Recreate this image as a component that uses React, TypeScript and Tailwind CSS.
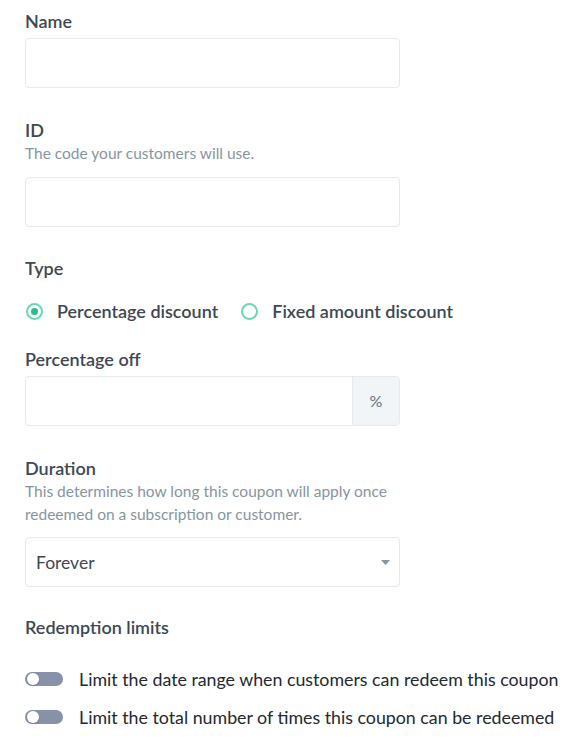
import { useState } from "react";

const font = { fontFamily: "'Source Sans Pro', Lato, 'Liberation Sans', sans-serif" };

function Label({ children }: { children: React.ReactNode }) {
  return <label className="block text-[18px] font-semibold leading-[22px] text-[#3d4852]">{children}</label>;
}

function Help({ children }: { children: React.ReactNode }) {
  return <p className="mt-[1px] text-[15.5px] leading-[23px] text-[#8795a1]">{children}</p>;
}

function Toggle({ label }: { label: string }) {
  const [on, setOn] = useState(false);
  return (
    <button type="button" onClick={() => setOn(!on)} className="flex items-center gap-4 text-left">
      <span className={`relative h-[14px] w-[38px] shrink-0 rounded-full ${on ? "bg-[#38c172]" : "bg-[#8792a8]"}`}>
        <span
          className={`absolute top-[1px] h-[12px] w-[12px] rounded-full bg-white shadow ${on ? "left-[25px]" : "left-[2px]"}`}
        />
      </span>
      <span className="text-[17.8px] leading-[22px] text-[#22292f]">{label}</span>
    </button>
  );
}

export default function App() {
  const [type, setType] = useState("percentage");

  return (
    <div className="min-h-screen bg-white px-[25px] pt-[10px]" style={font}>
      {/* Name */}
      <div>
        <Label>Name</Label>
        <input className="mt-[6px] block h-[50px] w-[375px] rounded border border-[#e6e9ee] px-3 outline-none" />
      </div>

      {/* ID */}
      <div className="mt-[31px]">
        <Label>ID</Label>
        <Help>The code your customers will use.</Help>
        <input className="mt-[12px] block h-[50px] w-[375px] rounded border border-[#e6e9ee] px-3 outline-none" />
      </div>

      {/* Type */}
      <div className="mt-[30px]">
        <Label>Type</Label>
        <div className="mt-[19px] flex items-center gap-[22px]">
          {[
            { id: "percentage", text: "Percentage discount" },
            { id: "fixed", text: "Fixed amount discount" },
          ].map((o) => (
            <button key={o.id} type="button" onClick={() => setType(o.id)} className="flex items-center gap-[14px] pl-[1px]">
              <span className="flex h-[17px] w-[17px] items-center justify-center rounded-full border-2 border-[#6ad6b8]">
                {type === o.id && <span className="h-[7px] w-[7px] rounded-full bg-[#2bbb8c]" />}
              </span>
              <span className="text-[18px] font-semibold text-[#3d4852]">{o.text}</span>
            </button>
          ))}
        </div>
      </div>

      {/* Percentage off */}
      <div className="mt-[23px]">
        <Label>Percentage off</Label>
        <div className="mt-[6px] flex h-[50px] w-[375px] overflow-hidden rounded border border-[#e6e9ee]">
          <input className="min-w-0 flex-1 px-3 outline-none" />
          <span className="flex w-[47px] items-center justify-center border-l border-[#e6e9ee] bg-[#f1f5f8] text-[16px] text-[#606f7b]">
            %
          </span>
        </div>
      </div>

      {/* Duration */}
      <div className="mt-[31px]">
        <Label>Duration</Label>
        <Help>
          This determines how long this coupon will apply once
          <br />
          redeemed on a subscription or customer.
        </Help>
        <div className="relative mt-[11px] h-[50px] w-[375px] rounded border border-[#e6e9ee]">
          <span className="absolute left-[10px] top-[12px] text-[17.5px] text-[#3d4852]">Forever</span>
          <svg className="absolute right-[9px] top-[22px]" width="9" height="5" viewBox="0 0 9 5">
            <path d="M0 0h9L4.5 5z" fill="#8795a1" />
          </svg>
        </div>
      </div>

      {/* Redemption limits */}
      <div className="mt-[29px]">
        <Label>Redemption limits</Label>
        <div className="mt-[30px] flex flex-col gap-[16px]">
          <Toggle label="Limit the date range when customers can redeem this coupon" />
          <Toggle label="Limit the total number of times this coupon can be redeemed" />
        </div>
      </div>
    </div>
  );
}
